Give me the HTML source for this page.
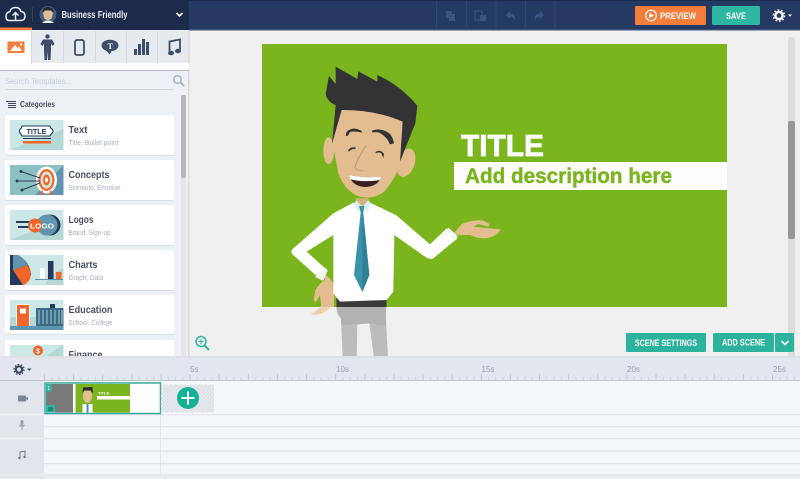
<!DOCTYPE html>
<html><head><meta charset="utf-8"><style>
html,body{margin:0;padding:0;background:#f0f0f0}
svg{display:block}
text{font-family:"Liberation Sans",sans-serif}
.t{font-size:10.5px;font-weight:bold;fill:#4a5063}
.s{font-size:7.5px;fill:#a8aebf}
.b{font-size:9.5px;font-weight:bold;fill:#fff}
.r{font-size:8px;fill:#9aa0b1}
</style></head><body>
<svg width="800" height="479" viewBox="0 0 800 479" xmlns="http://www.w3.org/2000/svg">
<defs>
<pattern id="h" width="2.500" height="2.500" patternUnits="userSpaceOnUse" patternTransform="rotate(45)"><rect width="2.500" height="2.500" fill="#e9ebef"/><rect width="1.250" height="2.500" fill="#dcdfe4"/></pattern>
<pattern id="t1" x="44" width="7.28" height="10" patternUnits="userSpaceOnUse"><rect width="1" height="3" y="7" fill="#cdd1db"/></pattern>
<pattern id="t2" x="44" width="29.12" height="10" patternUnits="userSpaceOnUse"><rect width="1" height="6" y="4" fill="#c5c9d4"/></pattern>
</defs>

<!-- canvas bg -->
<rect width="800" height="479" fill="#f0f0f0"/>

<!-- top bar -->
<rect width="800" height="30" fill="#253a63"/>
<rect width="800" height="1" fill="#1c2b4a"/>
<rect y="29" width="800" height="1.500" fill="#3b4f77"/>
<rect width="189" height="30" fill="#1d2b4b"/>
<rect x="0" y="27.500" width="32" height="3" fill="#f27b35"/>
<rect x="32" y="29" width="157" height="1.500" fill="#1d2b4b"/>
<!-- cloud -->
<path d="M9 20.500H20.500Q25 20.500 25 16Q25 12 21 11.500Q19.500 7 15 7.500Q10.500 8 10 11.500Q6 12.500 6 16.500Q6 20.500 9 20.500Z" fill="none" stroke="#e8edf5" stroke-width="1.500"/>
<path d="M15.500 21V13M12.500 15.500L15.500 12.500L18.500 15.500" fill="none" stroke="#e8edf5" stroke-width="1.500"/>
<rect x="32" y="7" width="1" height="15" fill="#33425f"/>
<!-- avatar -->
<circle cx="48" cy="14.500" r="8.500" fill="#3a5f86"/>
<path d="M43 12.500Q48 6 53 12.500L52 18Q48 22 44 18Z" fill="#e3bd8f"/>
<path d="M42.500 13L43.500 8L48 7L53 8.500L53.500 13L51 10.500H45Z" fill="#2c2c2c"/>
<path d="M42 23Q48 18 54 23Z" fill="#fff"/>
<text x="61.500" y="18" font-size="10" font-weight="bold" fill="#e6e9f0" textLength="66" lengthAdjust="spacingAndGlyphs">Business Friendly</text>
<path d="M176.500 13L179.500 16L182.500 13" fill="none" stroke="#fff" stroke-width="1.600"/>

<!-- toolbar separators -->
<g fill="#2f4672"><rect x="436" y="1" width="1" height="28"/><rect x="466" y="1" width="1" height="28"/><rect x="495.500" y="1" width="1" height="28"/><rect x="525" y="1" width="1" height="28"/><rect x="554.500" y="1" width="1" height="28"/></g>
<g fill="#3a5582">
<rect x="446" y="11" width="6" height="7"/><rect x="449" y="14" width="6" height="7"/>
<rect x="475" y="11" width="7" height="9" fill="none" stroke="#3a5582"/><rect x="480" y="15" width="6" height="6"/>
<path d="M506 15L510 11V13.500Q516 13.500 515 20Q513 16.500 510 16.500V19Z"/>
<path d="M544 15L540 11V13.500Q534 13.500 535 20Q537 16.500 540 16.500V19Z"/>
</g>
<!-- preview -->
<rect x="635" y="6" width="71" height="19" rx="1.500" fill="#f37d3b"/>
<circle cx="651" cy="15.500" r="5.300" fill="none" stroke="#fff" stroke-width="1.200"/>
<path d="M649.300 12.800L654 15.500L649.300 18.200Z" fill="#fff"/>
<text x="660" y="19" class="b" textLength="36" lengthAdjust="spacingAndGlyphs">PREVIEW</text>
<!-- save -->
<rect x="712" y="6" width="48" height="19" rx="1.500" fill="#2fb6a3"/>
<text x="726" y="19" class="b" textLength="20" lengthAdjust="spacingAndGlyphs">SAVE</text>
<!-- gear -->
<circle cx="779" cy="15.500" r="3.600" fill="none" stroke="#fff" stroke-width="2.400"/>
<circle cx="779" cy="15.500" r="5.600" fill="none" stroke="#fff" stroke-width="1.400" stroke-dasharray="1.800 1.720"/>
<path d="M788 14.500H792L790 16.800Z" fill="#fff"/>

<!-- left panel -->
<rect x="0" y="30" width="189" height="328" fill="#edf1f6"/>
<rect x="188" y="30" width="1.500" height="328" fill="#d8dade"/>
<rect x="0" y="63" width="189" height="7" fill="#fff"/>
<rect x="0" y="70" width="189" height="1" fill="#b9bcc4"/>
<!-- tabs -->
<rect x="0" y="31" width="31" height="33" fill="#fff"/>
<g fill="#e6e9ee">
<rect x="32" y="31" width="31" height="32"/><rect x="64" y="31" width="31" height="32"/><rect x="96" y="31" width="30" height="32"/><rect x="127" y="31" width="30" height="32"/><rect x="158" y="31" width="30" height="32"/>
</g>
<g fill="#d4d7dd"><rect x="31" y="31" width="1" height="33"/><rect x="63" y="31" width="1" height="32"/><rect x="95" y="31" width="1" height="32"/><rect x="126" y="31" width="1" height="32"/><rect x="157" y="31" width="1" height="32"/></g>
<!-- tab icons -->
<rect x="7.500" y="41.500" width="17" height="11.500" fill="#f37d3b"/>
<path d="M10 51L15 45L17.500 48L19 46.500L22 51Z" fill="#fff"/>
<circle cx="21" cy="44.500" r="1.200" fill="#fff"/>
<g fill="#3d4e6b">
<circle cx="47.500" cy="36.500" r="2.200"/>
<path d="M43 39.500H52L54.500 44L52.500 46L51 43.500V50.500L50.500 60H48L47.500 51L47 60H44.500L44 50.500V43.500L42.500 46L40.500 44Z"/>
</g>
<rect x="75" y="40" width="9" height="15" rx="2" fill="none" stroke="#3d4e6b" stroke-width="1.800"/>
<ellipse cx="110" cy="45.500" rx="8.500" ry="5.800" fill="#3d4e6b"/>
<path d="M106 50L112 50L109.500 54.500Z" fill="#3d4e6b"/>
<text x="107.500" y="49" font-size="8" font-weight="bold" fill="#fff" style="font-family:'Liberation Serif',serif">T</text>
<g fill="#3d4e6b"><rect x="134" y="49" width="3" height="6"/><rect x="138" y="44" width="3" height="11"/><rect x="142" y="39" width="3" height="16"/><rect x="146" y="42" width="3" height="13"/></g>
<path d="M169.500 52V41.500L180 39.500V50" fill="none" stroke="#3d4e6b" stroke-width="1.800"/>
<ellipse cx="171" cy="53" rx="3" ry="2.300" fill="#3d4e6b"/><ellipse cx="178" cy="51" rx="3" ry="2.300" fill="#3d4e6b"/>

<!-- search -->
<text x="5" y="84" font-size="8.500" fill="#c5cfdb" textLength="67" lengthAdjust="spacingAndGlyphs">Search Templates...</text>
<circle cx="177.500" cy="79.500" r="3.800" fill="none" stroke="#a9b6c6" stroke-width="1.600"/>
<path d="M180.500 82.500L184 86" stroke="#a9b6c6" stroke-width="2"/>
<rect x="5" y="89" width="169" height="1" fill="#d5dade"/>
<!-- categories -->
<g fill="#3f4558"><rect x="6" y="101" width="10" height="1"/><rect x="8" y="103" width="8" height="1"/><rect x="8" y="105" width="8" height="1"/><rect x="8" y="107" width="8" height="1"/></g>
<text x="20" y="107" font-size="8" font-weight="bold" fill="#4a5063" textLength="35" lengthAdjust="spacingAndGlyphs">Categories</text>
<!-- scrollbar -->
<rect x="181" y="95" width="5" height="263" fill="#e2e5ea"/>
<rect x="181" y="95" width="5" height="83" rx="2" fill="#b5b7ba"/>

<!-- cards -->
<g fill="#d9dfe7">
<rect x="5" y="116" width="169" height="40" rx="2"/><rect x="5" y="161" width="169" height="40" rx="2"/><rect x="5" y="206" width="169" height="40" rx="2"/><rect x="5" y="251" width="169" height="40" rx="2"/><rect x="5" y="296" width="169" height="39" rx="2"/>
</g>
<g fill="#fff">
<rect x="5" y="115" width="169" height="40" rx="2"/><rect x="5" y="160" width="169" height="40" rx="2"/><rect x="5" y="205" width="169" height="40" rx="2"/><rect x="5" y="250" width="169" height="40" rx="2"/><rect x="5" y="295" width="169" height="39" rx="2"/><rect x="5" y="340" width="169" height="20" rx="2"/>
</g>
<g>
<text x="68.500" y="133" class="t" textLength="19" lengthAdjust="spacingAndGlyphs">Text</text>
<text x="68.500" y="145" class="s" textLength="50" lengthAdjust="spacingAndGlyphs">Title, Bullet point</text>
<text x="68.500" y="178" class="t" textLength="41" lengthAdjust="spacingAndGlyphs">Concepts</text>
<text x="68.500" y="190" class="s" textLength="52" lengthAdjust="spacingAndGlyphs">Scenario, Emotion</text>
<text x="68.500" y="223" class="t" textLength="25" lengthAdjust="spacingAndGlyphs">Logos</text>
<text x="68.500" y="235" class="s" textLength="42" lengthAdjust="spacingAndGlyphs">Brand, Sign-up</text>
<text x="68.500" y="268" class="t" textLength="29" lengthAdjust="spacingAndGlyphs">Charts</text>
<text x="68.500" y="280" class="s" textLength="35" lengthAdjust="spacingAndGlyphs">Graph, Data</text>
<text x="68.500" y="313" class="t" textLength="44" lengthAdjust="spacingAndGlyphs">Education</text>
<text x="68.500" y="325" class="s" textLength="44" lengthAdjust="spacingAndGlyphs">School, College</text>
<text x="68.500" y="358" class="t" textLength="34" lengthAdjust="spacingAndGlyphs">Finance</text>
</g>

<!-- thumb: text -->
<rect x="10" y="120" width="53.500" height="30" fill="#cbe8e6"/>
<path d="M10 150L63.500 129V150Z" fill="#b5d8d4"/>
<path d="M22 130H50L51 132.500Q53 133 53 135T51 138L50 140H22L21 138Q19.500 137 19.500 135T21 132.500Z" fill="#fff" stroke="#233a5a" stroke-width="1.100" transform="translate(0,-4)"/>
<text x="26.500" y="134" font-size="7.500" font-weight="bold" fill="#233a5a" textLength="20" lengthAdjust="spacingAndGlyphs">TITLE</text>
<rect x="23" y="138" width="28" height="1" fill="#233a5a"/>
<rect x="23" y="141" width="28" height="2.500" fill="#f2662a"/>

<!-- thumb: concepts -->
<rect x="10" y="165" width="53.500" height="30" fill="#8cc0c3"/>
<path d="M63.500 165V195H35Z" fill="#5f95ae"/>
<ellipse cx="46.500" cy="180" rx="10.500" ry="13.500" fill="#fff"/>
<ellipse cx="46.500" cy="180" rx="8" ry="11" fill="#f2662a"/>
<ellipse cx="46.500" cy="180" rx="5.800" ry="8.500" fill="#cfe7e6"/>
<ellipse cx="46.500" cy="180" rx="3.500" ry="5.500" fill="#f2662a"/>
<ellipse cx="46.500" cy="180" rx="1.500" ry="2.500" fill="#fff"/>
<path d="M21 171.500L40 178M17 181H40M22 190L40 183" stroke="#2f4058" stroke-width="1"/>
<circle cx="21" cy="171.500" r="1.500" fill="#2f4058"/><circle cx="17" cy="181" r="1.500" fill="#2f4058"/><circle cx="22" cy="190" r="1.500" fill="#2f4058"/>
<path d="M40 195L42 191L44 195M49 195L51 191L53 195" fill="none" stroke="#f2662a"/>

<!-- thumb: logos -->
<rect x="10" y="210" width="53.500" height="30" fill="#cbe8e6"/>
<path d="M10 240L63.500 219V240Z" fill="#b5d8d4"/>
<rect x="16" y="221" width="22" height="2" fill="#233a5a"/><rect x="18" y="226" width="20" height="2" fill="#233a5a"/>
<circle cx="50" cy="225" r="10.500" fill="#233a5a"/>
<circle cx="47" cy="225" r="10.500" fill="#5f95ae"/>
<circle cx="35" cy="225.500" r="7" fill="#f2662a"/>
<text x="30" y="228.500" font-size="7.500" font-weight="bold" fill="#fff" textLength="24" lengthAdjust="spacingAndGlyphs">LOGO</text>

<!-- thumb: charts -->
<rect x="10" y="255" width="53.500" height="30" fill="#cbe8e6"/>
<path d="M45 285Q52 272 63.500 268V285Z" fill="#b5d8d4"/>
<rect x="10" y="255" width="3" height="30" fill="#233a5a"/>
<path d="M13 255H18Q30 262 31 275Q28 283 22 285H13Z" fill="#233a5a"/>
<path d="M13 255H18Q25 259 27.500 265L13 270Z" fill="#5f95ae"/>
<path d="M13 270L27.500 265Q32 272 30 279Q27 284 23 285Z" fill="#f2662a"/>
<rect x="40" y="268" width="5" height="11" fill="#fff"/>
<rect x="48" y="261" width="5.500" height="18" fill="#233a5a"/>
<rect x="56" y="272" width="5.500" height="7" fill="#f2662a"/>
<rect x="35" y="279" width="28" height="1" fill="#5f95ae"/>

<!-- thumb: education -->
<rect x="10" y="300" width="53.500" height="30" fill="#cbe8e6"/>
<rect x="10" y="317" width="53.500" height="9" fill="#b5d8d4"/>
<rect x="10" y="326" width="53.500" height="4" fill="#5f95ae"/>
<rect x="16" y="304" width="14" height="22" fill="#fff"/>
<rect x="17" y="305" width="12" height="21" fill="#f2662a"/>
<rect x="20" y="308.500" width="6" height="5" fill="#fff"/>
<rect x="36" y="308" width="27.500" height="18" fill="#3d6a85"/>
<g fill="#6f9cae"><rect x="38" y="310" width="2" height="14"/><rect x="42" y="310" width="2" height="14"/><rect x="46" y="310" width="2" height="14"/><rect x="50" y="310" width="2" height="14"/><rect x="54" y="310" width="2" height="14"/><rect x="58" y="310" width="2" height="14"/><rect x="61" y="310" width="2" height="14"/></g>
<rect x="50" y="304" width="5" height="4" fill="#233a5a"/>

<!-- thumb: finance -->
<rect x="10" y="345" width="53.500" height="15" fill="#cbe8e6"/>
<path d="M40 360L63.500 345V360Z" fill="#b5d8d4"/>
<circle cx="38" cy="350.500" r="5" fill="#f2662a"/>
<text x="36" y="353.500" font-size="7" font-weight="bold" fill="#fff">$</text>
<rect x="27" y="356" width="8" height="3" fill="#233a5a"/><rect x="35" y="356" width="10" height="3" fill="#5f95ae"/>

<!-- green slide -->
<rect x="262" y="44" width="465" height="263" fill="#7ab51d"/>
<rect x="454" y="162" width="273" height="28" fill="#fdfdfd"/>
<text x="461" y="156" font-size="31" font-weight="bold" fill="#fff" stroke="#fff" stroke-width=".7" textLength="83" lengthAdjust="spacingAndGlyphs">TITLE</text>
<text x="465" y="183" font-size="21" font-weight="bold" fill="#7ab51d" stroke="#7ab51d" stroke-width=".4" textLength="207" lengthAdjust="spacingAndGlyphs">Add description here</text>

<!-- character body lower (pants, faded) -->
<g transform="translate(270,200) scale(.33333)">
<path d="M200 300H350L347 345L354 473H312L298 370L262 373L260 473H218L213 355Q198 340 200 320Z" fill="#bcbcbc"/>
<path d="M203 340Q207 350 213 355L215 376Q240 372 262 373L298 370L348 378V321H200Z" fill="#b2b2b2"/>
</g>
<rect x="336.500" y="298" width="50" height="9" fill="#3a3a3a"/>
<!-- left hand -->
<g transform="translate(270,200) scale(.33333)">
<path d="M192 300Q185 325 160 338Q135 348 122 342Q145 330 155 315L152 300Z" fill="#ead0ad"/>
<path d="M162 222L180 235L192 255L192 321H154L150 285L138 306L131 302L136 270Q148 250 165 240Z" fill="#e3bd8f"/>
<!-- right hand -->
<path d="M552 100L575 72Q610 58 640 62L658 72L655 80L625 72L610 80Q650 85 692 88Q685 105 660 112Q630 120 600 105L565 105Z" fill="#e3bd8f"/>
<!-- shirt -->
<path d="M190 40L250 8H300L378 45L480 133L530 85L562 115L490 175Q478 180 465 170L373 105L370 275L350 300L210 305L190 280V105L110 155L173 212L155 242L70 165Q58 155 70 145Z" fill="#fff"/>
<path d="M535 83L543 90L563 108L558 122L528 92Z" fill="#f4f6f2"/>
<path d="M165 202L173 212L160 242L136 232L140 225Z" fill="#f4f6f2"/>
<!-- neck + collar -->
<path d="M258 -5H295V12L275 22L258 12Z" fill="#d9ae7e"/>
<path d="M258 0L275 17L265 38L253 12Z" fill="#d9eef0"/>
<path d="M295 0L280 17L290 38L303 12Z" fill="#d9eef0"/>
<!-- tie -->
<path d="M267 18H283L280 38L298 225L277 276L252 225L272 38Z" fill="#3b93ab"/>
<path d="M277 38L298 225L277 276Z" fill="#2f7f97"/>
</g>
<!-- head -->
<g transform="translate(270,60) scale(.33333)">
<ellipse cx="176" cy="272" rx="16" ry="40" fill="#e3bd8f"/>
<ellipse cx="408" cy="308" rx="26" ry="44" transform="rotate(18 408 308)" fill="#e3bd8f"/>
<path d="M200 150H400L395 300Q380 350 345 393Q310 420 270 410Q225 395 205 340L188 250Z" fill="#e3bd8f"/>
<path d="M197 20L262 57L265 34L322 65L322 45Q390 75 442 137L436 190L390 305L398 185Q320 150 215 150L186 252L197 135Q170 125 167 100L177 48L197 72Z" fill="#333335"/>
<path d="M228 228Q225 210 250 206Q265 206 276 214L275 218Q255 212 240 216L233 228Z" fill="#333335"/>
<path d="M305 212Q335 202 360 222Q370 235 372 250L360 253Q350 228 325 217Q315 215 308 218Z" fill="#333335"/>
<path d="M234 273Q240 258 258 263L256 267Q245 265 238 274Z" fill="#333335"/>
<path d="M316 276Q332 266 342 282L340 294L334 280Q326 274 318 280Z" fill="#333335"/>
<path d="M288 256Q260 300 255 320Q258 335 280 332" fill="none" stroke="#b89a7a" stroke-width="3"/>
<path d="M237 345Q285 355 333 350Q325 380 285 381Q245 378 237 345Z" fill="#3a1f22"/>
<path d="M237 345Q285 355 333 350L330 360Q285 368 241 358Z" fill="#fff"/>
</g>

<!-- page scrollbar -->
<rect x="788" y="37" width="7" height="321" rx="3" fill="#dcdcdc"/>
<rect x="788" y="121" width="7" height="118" rx="2" fill="#979797"/>

<!-- magnifier -->
<circle cx="201" cy="341.500" r="5" fill="none" stroke="#2fb5a2" stroke-width="1.500"/>
<path d="M204.500 345.500L209 350" stroke="#2fb5a2" stroke-width="2"/>
<path d="M198.500 341.500H203.500M201 339V344" stroke="#2fb5a2" stroke-width="1"/>

<!-- scene buttons -->
<rect x="626" y="333" width="80" height="19" rx="1.500" fill="#2bb39e"/>
<text x="635" y="346" class="b" textLength="62" lengthAdjust="spacingAndGlyphs">SCENE SETTINGS</text>
<rect x="713" y="333" width="61" height="19" rx="1.500" fill="#2bb39e"/>
<text x="722" y="345.500" class="b" textLength="43" lengthAdjust="spacingAndGlyphs">ADD SCENE</text>
<rect x="775" y="333" width="19" height="19" rx="1.500" fill="#2bb39e"/>
<path d="M781.500 341L785 344.500L788.500 341" fill="none" stroke="#fff" stroke-width="1.600"/>

<!-- timeline header -->
<rect x="0" y="356" width="800" height="2.500" fill="#dfe1e4"/>
<rect x="0" y="358" width="800" height="22" fill="#e3e6ee"/>
<rect x="0" y="380" width="800" height="1.500" fill="#c3c6cf"/>
<rect x="44" y="370" width="756" height="10" fill="url(#t1)"/>
<rect x="44" y="370" width="756" height="10" fill="url(#t2)"/>
<text x="190" y="372" class="r">5s</text>
<text x="336" y="372" class="r">10s</text>
<text x="481.500" y="372" class="r">15s</text>
<text x="627" y="372" class="r">20s</text>
<text x="773" y="372" class="r">25s</text>
<!-- tl gear -->
<circle cx="19" cy="369.500" r="3.200" fill="none" stroke="#3b4a63" stroke-width="2.200"/>
<circle cx="19" cy="369.500" r="5" fill="none" stroke="#3b4a63" stroke-width="1.300" stroke-dasharray="1.600 1.540"/>
<path d="M27 368.500H31.500L29.200 371Z" fill="#3b4a63"/>

<!-- tracks -->
<rect x="0" y="381" width="800" height="98" fill="#e9ecf1"/>
<rect x="44" y="381" width="756" height="93" fill="#f3f6fb"/>
<rect x="0" y="381" width="44" height="98" fill="#e2e5ec"/>
<g fill="#e3e6ec"><rect x="44" y="414" width="756" height="1.300"/><rect x="44" y="426" width="756" height="1.300"/><rect x="44" y="438" width="756" height="1.300"/><rect x="44" y="450.500" width="756" height="1.300"/><rect x="44" y="463" width="756" height="1.300"/><rect x="44" y="474" width="756" height="1.300"/><rect x="160" y="381" width="1" height="93"/></g>
<g fill="#eceff4"><rect x="0" y="414" width="44" height="1.300"/><rect x="0" y="438" width="44" height="1.300"/><rect x="0" y="474" width="44" height="1.300"/></g>
<!-- track icons -->
<rect x="18" y="395.500" width="8" height="6" rx="1" fill="#7d8595"/>
<path d="M26 398L28 396.500V400.500L26 399Z" fill="#7d8595"/>
<rect x="20.500" y="420" width="3" height="6" rx="1.500" fill="#9aa1ae"/>
<path d="M19.500 425Q22 429 24.500 425M22 428V430" fill="none" stroke="#9aa1ae"/>
<path d="M20 458V452L25 451V457" fill="none" stroke="#6d7484" stroke-width=".9"/>
<circle cx="19.500" cy="458" r="1.200" fill="#6d7484"/><circle cx="24.500" cy="457" r="1.200" fill="#6d7484"/>

<!-- scene clip -->
<rect x="45" y="383" width="115.500" height="30.500" fill="#fff" stroke="#3aa89a" stroke-width="1.500"/>
<rect x="46" y="384" width="27" height="28.500" fill="#7a7a7a"/>
<rect x="75.500" y="384" width="54.500" height="28.500" fill="#7ab51d"/>
<rect x="97" y="396" width="33" height="3.500" fill="#fff"/>
<text x="98" y="394.500" font-size="4" font-weight="bold" fill="#fff">TITLE</text>
<g transform="translate(75.500,384)">
<path d="M7 20H17V28.500H7Z" fill="#fff"/>
<rect x="11" y="20" width="2" height="8.500" fill="#3b93ab"/>
<ellipse cx="12" cy="12" rx="4.500" ry="7" fill="#e3bd8f"/>
<path d="M7 9L7.500 3.500L17 3L17.500 9L15 6.500H9Z" fill="#2c2c2c"/>
</g>
<rect x="46" y="384" width="5.500" height="7.500" fill="#2fb5a2"/>
<text x="47.300" y="389.800" font-size="5.500" fill="#fff">1</text>
<rect x="46" y="405" width="9" height="7.500" fill="#2fb5a2"/>
<rect x="48" y="407" width="5" height="4" fill="#1d8a7a"/>

<!-- add scene -->
<rect x="161.500" y="384" width="53" height="29" fill="url(#h)" stroke="#fff" stroke-dasharray="3 2"/>
<circle cx="188" cy="398" r="11" fill="#14b097"/>
<path d="M188 391.500V404.500M181.500 398H194.500" stroke="#fff" stroke-width="2"/>
</svg>
</body></html>
